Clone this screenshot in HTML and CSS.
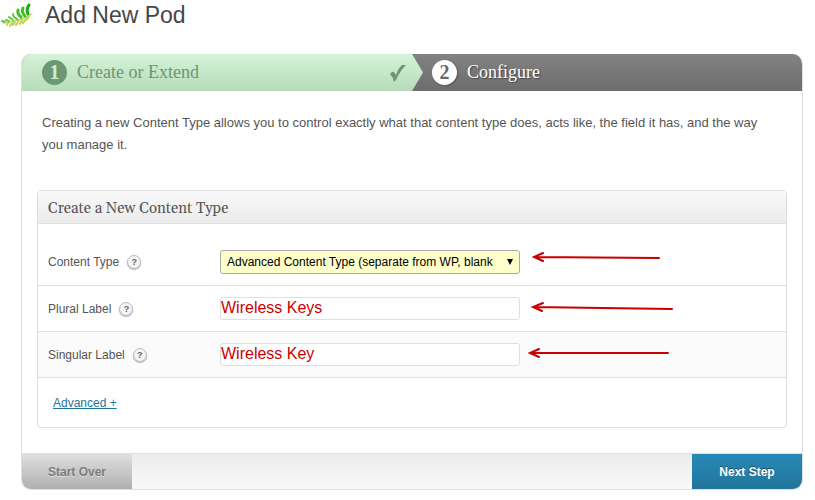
FILE: index.html
```html
<!DOCTYPE html>
<html lang="en">
<head>
<meta charset="utf-8">
<title>Add New Pod</title>
<link rel="stylesheet" href="styles.css">
</head>
<body>
<header class="page-head">
  <svg class="leaf" viewBox="0 0 34 32" aria-hidden="true">
    <g fill="none" stroke-linecap="round">
      <path d="M3 23C13 23 24 18 32 14" stroke="#c9a878" stroke-width="1"/>
      <path d="M28 14Q26 9 29 5" stroke="#22a80c" stroke-width="3"/>
      <path d="M25 16Q21 12 23 8M21 17Q17 14 18 10" stroke="#3fc022" stroke-width="3"/>
      <path d="M17 19Q13 17 13 14M13 20L9 17M9 21L6 20M5 22L2 21" stroke="#5fc93a" stroke-width="2"/>
      <path d="M29 16Q28 19 26 20M26 18Q25 21 23 23M22 19Q22 22 20 24M19 20Q18 23 16 25M15 22L13 25M12 23L10 26M8 23L7 25" stroke="#bcd840" stroke-width="2"/>
    </g>
  </svg>
  <h1>Add New Pod</h1>
</header>
<main class="wizard">
  <ol class="steps">
    <li class="step done"><span class="num">1</span>Create or Extend
      <svg class="check" viewBox="0 0 18 20" aria-hidden="true"><path d="M1 11Q3 8 5 9L7 12Q10 4 13 2L17 2Q11 8 7 17L5 19Q4 14 1 11Z" fill="#6b9773"/></svg>
      <svg class="point" viewBox="0 0 11 37" preserveAspectRatio="none" aria-hidden="true"><defs><linearGradient id="g" x2="0" y2="1"><stop stop-color="#d4f3d7"/><stop offset="1" stop-color="#b8dbbb"/></linearGradient></defs><path d="M0 0L11 18.500L0 37Z" fill="url(#g)"/></svg>
    </li>
    <li class="step current"><span class="num">2</span>Configure</li>
  </ol>
  <div class="content">
    <p class="intro">Creating a new Content Type allows you to control exactly what that content type does, acts like, the field it has, and the way you manage it.</p>
    <section class="box">
      <h2>Create a New Content Type</h2>
      <div class="row first">
        <div class="label"><label for="type">Content Type</label><button class="help" type="button" aria-label="Help on content type">?</button></div>
        <div class="select-wrap"><select id="type"><option>Advanced Content Type (separate from WP, blank</option></select></div>
        <svg class="arrow" viewBox="0 0 160 16" aria-hidden="true"><path d="M14 3L139 4M23 -1L14 3L23 7"/></svg>
      </div>
      <div class="row">
        <div class="label"><label for="plural">Plural Label</label><button class="help" type="button" aria-label="Help on plural label">?</button></div>
        <input id="plural" type="text" value="Wireless Keys">
        <svg class="arrow" viewBox="0 0 160 16" aria-hidden="true"><path d="M13 6L152 8M23 2L13 6L22 10"/></svg>
      </div>
      <div class="row alt">
        <div class="label"><label for="single">Singular Label</label><button class="help" type="button" aria-label="Help on singular label">?</button></div>
        <input id="single" type="text" value="Wireless Key">
        <svg class="arrow" viewBox="0 0 160 16" aria-hidden="true"><path d="M10 6L148 6M19 2L10 6L19 10"/></svg>
      </div>
      <div class="advanced"><a href="#advanced">Advanced +</a></div>
    </section>
  </div>
  <footer class="actions">
    <button class="over" type="button">Start Over</button>
    <button class="next" type="button">Next Step</button>
  </footer>
</main>
</body>
</html>
```
FILE: styles.css
```css
* { box-sizing: border-box; }
body { margin: 0; background: #fff; color: #555; font: 12px "Liberation Sans", Arial, sans-serif; }
.page-head { display: flex; height: 32px; gap: 11px; }
.leaf { width: 34px; height: 32px; }
h1 { margin: 0; font-size: 23px; line-height: 30px; font-weight: 400; color: #464646; }
.wizard { margin: 22px 12px 10px 21px; border: 1px solid #dfdfdf; border-top: 0; border-radius: 10px; overflow: hidden; }
.steps { display: flex; height: 37px; margin: 0; padding: 0; list-style: none; background: linear-gradient(#828282, #6d6d6d); }
.step { position: relative; flex: 1; display: flex; align-items: center; gap: 10px; padding-left: 20px; font: 18px "Liberation Serif", "Times New Roman", serif; color: #fff; text-shadow: 1px 1px 1px #444; }
.done { background: linear-gradient(#d4f3d7, #b8dbbb); color: #6b9773; text-shadow: none; }
.num { width: 25px; height: 25px; border-radius: 50%; background: #fff; color: #666; font-size: 20px; line-height: 25px; font-weight: 700; text-align: center; text-shadow: none; box-shadow: 1px 1px 2px #555; }
.done .num { background: #6b9773; color: #cdeed0; box-shadow: none; }
.check { width: 18px; height: 20px; margin-left: auto; margin-right: 5px; }
.point { position: absolute; left: 100%; top: 0; width: 11px; height: 37px; }
.content { padding: 21px 15px 25px; }
.intro { margin: 0 0 34px; padding: 0 15px 0 5px; font-size: 13px; line-height: 22px; }
.box { border: 1px solid #dfdfdf; border-radius: 4px; overflow: hidden; }
h2 { margin: 0; padding-left: 10px; height: 33px; border-bottom: 1px solid #dfdfdf; background: linear-gradient(#f9f9f9, #ebebeb); font: 15px/36px Georgia, Gelasio, "Liberation Serif", serif; color: #555; }
.row { display: flex; align-items: center; height: 46px; padding-left: 10px; border-bottom: 1px solid #dfdfdf; }
.first { height: 62px; padding-top: 14px; }
.alt { background: #fbfbfb; }
.label { width: 172px; display: flex; align-items: center; gap: 8px; }
.help { width: 14px; height: 14px; padding: 0; border: 1px solid #bbb; border-radius: 50%; background: #f4f4f4; color: #666; font: bold 9px/12px "Liberation Sans", Arial, sans-serif; box-shadow: 0 1px 1px #bbb; }
.select-wrap { position: relative; width: 300px; }
.select-wrap::after { content: ""; position: absolute; right: 7px; top: 9px; border: solid transparent; border-width: 6px 3px 0; border-top-color: #000; }
select { appearance: none; display: block; width: 100%; height: 24px; padding: 0 6px; border: 1px solid #aaa; border-radius: 3px; background: #ffc; color: #000; font: 12px "Liberation Sans", Arial, sans-serif; }
input { width: 300px; height: 23px; padding: 0 0 2px; border: 1px solid #dfdfdf; border-radius: 3px; background: #fff; color: #c00; font: 16px "Liberation Sans", Arial, sans-serif; }
.arrow { width: 160px; height: 16px; overflow: visible; fill: none; stroke: #c80000; stroke-width: 2; stroke-linecap: round; }
.advanced { height: 49px; padding: 18px 15px; }
a { color: #21759b; }
.actions { display: flex; justify-content: space-between; height: 36px; border-top: 1px solid #dfdfdf; background: linear-gradient(#ececec, #f9f9f9); }
.actions button { width: 110px; border: 0; font: bold 12px "Liberation Sans", Arial, sans-serif; }
.over { background: linear-gradient(#dfdfdf, #b0b0b0); color: #7d7d7d; text-shadow: 0 1px 0 #ddd; }
.next { background: linear-gradient(#278ab7, #21759b); color: #fff; text-shadow: 0 -1px 0 #174f69; }
```
